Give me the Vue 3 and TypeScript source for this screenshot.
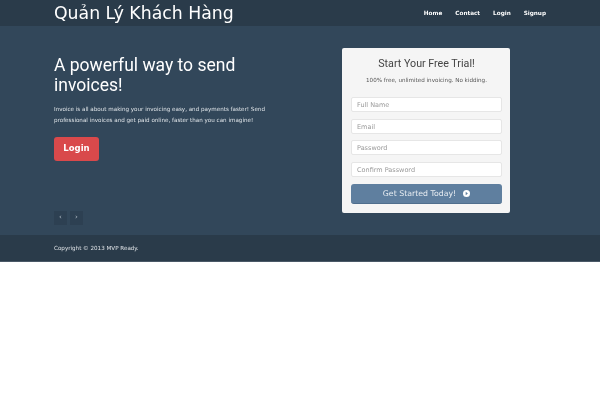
<script setup lang="ts">
const navLinks: string[] = ['Home', 'Contact', 'Login', 'Signup']
const fields: string[] = ['Full Name', 'Email', 'Password', 'Confirm Password']
</script>

<template>
  <div class="page">
    <header class="navbar">
      <div class="container nav-inner">
        <a class="brand">Quản Lý Khách Hàng</a>
        <nav class="nav">
          <a v-for="link in navLinks" :key="link">{{ link }}</a>
        </nav>
      </div>
    </header>

    <section class="hero">
      <div class="container hero-inner">
        <div class="copy">
          <h1>A powerful way to send invoices!</h1>
          <p>Invoice is all about making your invoicing easy, and payments faster! Send professional invoices and get paid online, faster than you can imagine!</p>
          <a class="login">Login</a>
          <div class="pager">
            <span>‹</span>
            <span>›</span>
          </div>
        </div>
        <form class="card" @submit.prevent>
          <h2>Start Your Free Trial!</h2>
          <p>100% free, unlimited invoicing. No kidding.</p>
          <input v-for="f in fields" :key="f" type="text" :placeholder="f" />
          <button type="submit">
            Get Started Today!
            <svg width="7" height="7" viewBox="0 0 10 10"><circle cx="5" cy="5" r="5" fill="#fff" /><path d="M3.8 2.5 7 5 3.8 7.5z" fill="#5f7f9f" /></svg>
          </button>
        </form>
      </div>
    </section>

    <footer class="footer">
      <div class="container">Copyright © 2013 MVP Ready.</div>
    </footer>
  </div>
</template>

<style>
body { background: #fff; }
</style>

<style scoped>
.page { font-family: "DejaVu Sans", sans-serif; width: 600px; will-change: transform; }
.container { width: 492px; margin: 0 auto; }
.navbar { height: 26px; background: #2a3b4a; overflow: hidden; }
.nav-inner { display: flex; justify-content: space-between; align-items: center; height: 26px; }
.brand { color: #fff; font-size: 17.3px; line-height: 26px; }
.nav { display: flex; gap: 13px; font-size: 5.7px; font-weight: 700; color: #fff; }

.hero { height: 209px; background: #32475a; }
.hero-inner { display: flex; align-items: flex-start; }
.copy { width: 222px; padding-top: 28.5px; }
h1 { margin: 0; font: 400 17.5px/20px Roboto, sans-serif; color: #fff; }
.copy p { margin: 9.5px 0 0; font-size: 5.6px; line-height: 11px; color: #dfe4e8; }
.login { display: block; width: 45px; height: 23.5px; margin-top: 11px; background: #d9494b; border-radius: 3px; color: #fff; font-size: 8.5px; font-weight: 700; line-height: 23.5px; text-align: center; }
.pager { display: flex; gap: 3px; margin-top: 50px; }
.pager span { width: 13px; height: 14px; background: #2d4052; color: #b5c0ca; font-size: 7px; line-height: 13px; text-align: center; }

.card { box-sizing: border-box; width: 168px; height: 165px; margin: 22px 0 0 66px; padding: 9px 8px 0 9px; background: #f5f5f5; border-radius: 2px; display: flex; flex-direction: column; }
h2 { margin: 0; font: 400 10.7px/13px Roboto, sans-serif; color: #444; text-align: center; }
.card p { margin: 6px 0 12px; font-size: 5.6px; line-height: 9px; color: #555; text-align: center; white-space: nowrap; }
input { box-sizing: border-box; height: 15px; margin: 0 0 6.67px; padding: 1px 5px 0; border: 1px solid #e6e6e6; border-radius: 2px; background: #fff; font: 6.5px "DejaVu Sans", sans-serif; outline: none; }
input::placeholder { color: #999; opacity: 1; }
button { box-sizing: border-box; height: 20px; padding: 0 0 0 0; border: 0; border-bottom: 1px solid #4f6e8d; border-radius: 3px; background: #5f7f9f; color: #e8edf2; font: 7.8px "DejaVu Sans", sans-serif; display: flex; align-items: center; justify-content: center; gap: 7px; }

.footer { box-sizing: border-box; height: 27px; background: #2a3b4a; border-bottom: 1px solid #4a5967; color: #dfe3e7; font-size: 5.6px; line-height: 26px; }
</style>
